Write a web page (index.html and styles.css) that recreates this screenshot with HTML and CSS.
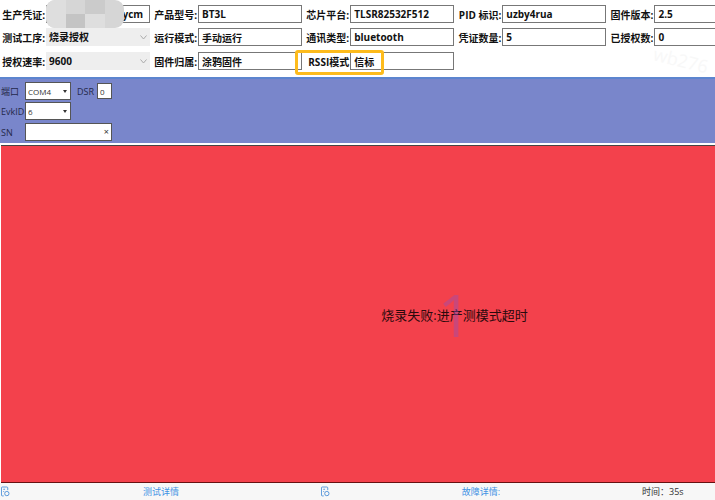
FILE: index.html
```
<!DOCTYPE html>
<html lang="zh-CN">
<head>
    <meta charset="UTF-8">
    <meta name="viewport" content="width=device-width, initial-scale=1.0">
    <title>烧录授权</title>
    <link rel="stylesheet" href="styles.css">
</head>
<body>
    <header class="info">
        <div class="field">
            <label for="token">生产凭证:</label>
            <input id="token" class="right" type="text" value="ycm">
            <div class="mosaic"><i></i><i></i><i></i><i></i><i></i><i></i><i></i><i></i></div>
        </div>
        <div class="field">
            <label for="model">产品型号:</label>
            <input id="model" type="text" value="BT3L">
        </div>
        <div class="field">
            <label for="chip">芯片平台:</label>
            <input id="chip" type="text" value="TLSR82532F512">
        </div>
        <div class="field">
            <label for="pid">PID 标识:</label>
            <input id="pid" type="text" value="uzby4rua">
        </div>
        <div class="field last">
            <label for="version">固件版本:</label>
            <input id="version" type="text" value="2.5">
        </div>

        <div class="field">
            <label for="step">测试工序:</label>
            <select id="step"><option>烧录授权</option></select>
        </div>
        <div class="field">
            <label for="run">运行模式:</label>
            <input id="run" type="text" value="手动运行">
        </div>
        <div class="field">
            <label for="comm">通讯类型:</label>
            <input id="comm" type="text" value="bluetooth">
        </div>
        <div class="field">
            <label for="total">凭证数量:</label>
            <input id="total" type="text" value="5">
        </div>
        <div class="field last">
            <label for="used">已授权数:</label>
            <input id="used" type="text" value="0">
        </div>

        <div class="field">
            <label for="rate">授权速率:</label>
            <select id="rate"><option>9600</option></select>
        </div>
        <div class="field">
            <label for="owner">固件归属:</label>
            <input id="owner" type="text" value="涂鸦固件">
        </div>
        <div class="field marked">
            <label for="rssi">RSSI模式</label>
            <input id="rssi" type="text" value="信标">
        </div>
        <span class="watermark">wb276</span>
    </header>

    <section class="port">
        <div class="line">
            <label for="com">端口</label>
            <select id="com"><option>COM4</option></select>
            <label class="dsr" for="dsr">DSR</label>
            <input id="dsr" type="text" value="0">
        </div>
        <div class="line">
            <label for="evk">EvkID</label>
            <select id="evk"><option>6</option></select>
        </div>
        <div class="line">
            <label for="sn">SN</label>
            <div class="sn">
                <input id="sn" type="text">
                <button type="button" aria-label="清空">×</button>
            </div>
        </div>
    </section>

    <main class="result">
        <p class="message">烧录失败:进产测模式超时<span class="number">1</span></p>
    </main>

    <footer>
        <div class="detail">
            <svg viewBox="0 0 10 11"><path d="M3 10.4H1.5Q.5 10.4 .5 9.4V1.5Q.5.5 1.5.5H6.5Q7.5.5 7.5 1.5V4M2.5 3H4.5M2.5 5.5H3.5"/><circle cx="6.5" cy="7.8" r="2.4"/></svg>
            <a href="#">测试详情</a>
        </div>
        <div class="detail">
            <svg viewBox="0 0 10 11"><path d="M3 10.4H1.5Q.5 10.4 .5 9.4V1.5Q.5.5 1.5.5H6.5Q7.5.5 7.5 1.5V4M2.5 3H4.5M2.5 5.5H3.5"/><circle cx="6.5" cy="7.8" r="2.4"/></svg>
            <a href="#">故障详情:</a>
        </div>
        <div class="time">时间：35s</div>
    </footer>
</body>
</html>
```

FILE: styles.css
```
*, *::after{
    box-sizing: border-box;
}
body{
    margin: 0;
    min-height: 100vh;
    display: flex;
    flex-direction: column;
    font-family: "Open Sans", "Noto Sans CJK SC", sans-serif;
    font-size: 9px;
    color: #111;
    background-color: white;
}
input, select, button{
    font: inherit;
    color: inherit;
    margin: 0;
    min-width: 0;
    border-radius: 0;
}

/* product info */
.info{
    position: relative;
    display: grid;
    grid-template-columns: repeat(4, 10fr) 7fr;
    gap: 5px 7px;
    padding: 5px 0px 7px 5px;
    font-size: 10px;
    font-weight: bold;
}
.field{
    position: relative;
    display: flex;
    align-items: center;
    min-width: 0;
    height: 18px;
}
.field:nth-child(n+11){
    margin-top: 1px;
}
.field label{
    width: 41px;
    padding-right: 1px;
    display: flex;
    justify-content: flex-end;
    white-space: nowrap;
}
.field input, .field select{
    flex: 1;
    height: 18px;
    padding: 0px 3px;
    border: 1px solid #777;
    background-color: white;
}
.field.last input{
    border-right: 0;
}
.field .right{
    text-align: right;
    padding-right: 6px;
}
.field select{
    appearance: none;
    border: 0;
    background: #eee url("data:image/svg+xml,%3Csvg xmlns='http://www.w3.org/2000/svg' width='7' height='5'%3E%3Cpath d='M.5.5L3.5 4L6.5.5' fill='none' stroke='%23aaa'/%3E%3C/svg%3E") no-repeat right 3px center;
}
.mosaic{
    position: absolute;
    left: 41px;
    top: -5px;
    width: 78px;
    height: 28px;
    display: grid;
    grid-template-columns: repeat(4, 1fr);
    border-radius: 9px;
    overflow: hidden;
    background-color: #d6d6d6;
}
.mosaic i:nth-child(odd){
    background-color: #dedede;
}
.mosaic i:nth-child(6){
    background-color: #c4c4c4;
}
.mosaic i:nth-child(3){
    background-color: #cbcbcb;
}
.marked::after{
    content: "";
    position: absolute;
    left: -14px;
    top: -2px;
    width: 89px;
    height: 25px;
    border: 3px solid #fdbb1c;
    border-radius: 3px;
    pointer-events: none;
}
.watermark{
    position: absolute;
    right: 6px;
    bottom: 7px;
    rotate: 14deg;
    font-size: 18px;
    line-height: 20px;
    font-weight: normal;
    color: #f8f8f8;
}

/* serial port */
.port{
    padding: 2px 0px 0px 1px;
    border-top: 2px solid #5c85cf;
    background-color: #7986cb;
    color: #25294a;
}
.line{
    display: flex;
    align-items: center;
    height: 20px;
}
.line:last-child{
    height: 22px;
}
.line label{
    width: 24px;
}
.line .dsr{
    width: 20px;
    margin-left: 6px;
}
.line select, .line input{
    height: 18px;
    border: 1px solid #555;
    background-color: white;
    font-size: 8px;
    color: #333;
    padding: 0px 2px;
}
.line select{
    width: 46px;
    appearance: none;
    background: white url("data:image/svg+xml,%3Csvg xmlns='http://www.w3.org/2000/svg' width='4' height='3'%3E%3Cpath d='M0 0H4L2 3Z' fill='%23333'/%3E%3C/svg%3E") no-repeat right 3px center;
}
.line #dsr{
    width: 15px;
    height: 16px;
}
.sn{
    position: relative;
    display: flex;
    width: 87px;
}
.sn input{
    width: 100%;
}
.sn button{
    position: absolute;
    right: 2px;
    top: 4px;
    padding: 0px 1px;
    border: 0;
    background: none;
    line-height: 10px;
    color: #333;
}

/* result */
.result{
    flex: 1;
    display: flex;
    align-items: center;
    justify-content: center;
    margin: 2px 0px 0px 1px;
    padding-left: 27%;
    border-top: 1px solid #444;
    border-bottom: 1px solid #611;
    background-color: #f3414c;
}
.message{
    position: relative;
    margin: 0;
    font-size: 13px;
    color: #2a0a0c;
    white-space: nowrap;
}
.number{
    position: absolute;
    left: 50%;
    top: 50%;
    translate: -50% -50%;
    font-size: 58px;
    font-weight: 400;
    color: rgba(140, 80, 190, 0.4);
}

footer{
    display: grid;
    grid-template-columns: 64fr 64fr 15fr;
    align-items: center;
    height: 17px;
    background-color: #f7f7f7;
}
.detail{
    display: flex;
    align-items: center;
    padding-left: 1px;
}
.detail svg{
    width: 9px;
    height: 11px;
    fill: none;
    stroke: #4a8fd8;
}
.detail a{
    flex: 1;
    text-align: center;
    padding-right: 8px;
    color: #3f92e4;
    text-decoration: none;
}
.time{
    padding-left: 2px;
    color: #333;
    white-space: nowrap;
}
```
